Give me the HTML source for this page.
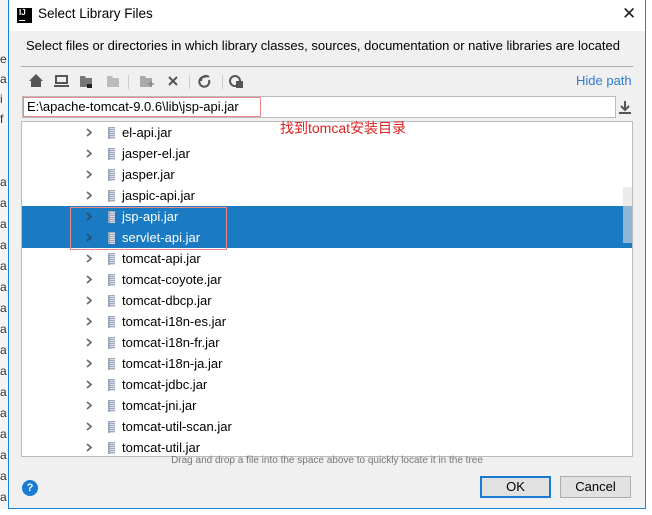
<!DOCTYPE html>
<html><head><meta charset="utf-8"><style>
*{margin:0;padding:0;box-sizing:border-box}
body{width:652px;height:515px;overflow:hidden;background:#fff;font-family:"Segoe UI","Liberation Sans","Noto Sans CJK SC",sans-serif;font-size:13px;color:#000;position:relative}
.abs{position:absolute}
#dlg{left:8px;top:0;width:638px;height:509px;background:#f0f0f0;border:1px solid #1883d7;border-top:none}
#title{left:0;top:0;width:636px;height:31px;background:#fff}
.row{position:absolute;left:0;width:610px;height:21px;line-height:21px}
.row .chev{position:absolute;left:64px;top:6px;width:6px;height:9px}
.row .jar{position:absolute;left:86px;top:5px;width:7px;height:12px;background:repeating-linear-gradient(#9ab 0 1px,#dde 1px 2px);border-left:2px solid #9ab}
.row .t{position:absolute;left:100px;top:0}
.sel{background:#1a7bc3;color:#fff}
</style></head><body>
<div class="abs" style="left:0;top:0;width:8px;height:515px;background:#f4f4f4;font-size:12px;color:#333">
<div class="abs" style="top:52px;left:0">e</div><div class="abs" style="top:72px;left:0">a</div><div class="abs" style="top:92px;left:0">i</div><div class="abs" style="top:112px;left:0">f</div>
<div class="abs" style="top:175px">a</div><div class="abs" style="top:196px">a</div><div class="abs" style="top:217px">a</div><div class="abs" style="top:238px">a</div><div class="abs" style="top:259px">a</div><div class="abs" style="top:280px">a</div><div class="abs" style="top:301px">a</div><div class="abs" style="top:322px">a</div><div class="abs" style="top:343px">a</div><div class="abs" style="top:364px">a</div><div class="abs" style="top:385px">a</div><div class="abs" style="top:406px">a</div><div class="abs" style="top:427px">a</div><div class="abs" style="top:448px">a</div><div class="abs" style="top:469px">a</div><div class="abs" style="top:490px">a</div>
</div>
<div class="abs" style="left:0;top:509px;width:652px;height:6px;background:#fff"></div>
<svg width="0" height="0" style="position:absolute"><defs><symbol id="cv" viewBox="0 0 6 9"><path d="M1 1l4 3.5L1 8" fill="none" stroke="#666" stroke-width="1.6"/></symbol><symbol id="cvs" viewBox="0 0 6 9"><path d="M1 1l4 3.5L1 8" fill="none" stroke="#2d4a66" stroke-width="1.6"/></symbol></defs></svg>
<div class="abs" id="dlg">
 <div class="abs" id="title">
  <div class="abs" style="left:8px;top:8px;width:15px;height:15px;background:#000;color:#fff;font-size:8px;font-weight:bold;line-height:10px;padding-left:2px">IJ<div style="position:absolute;left:2px;bottom:2px;width:6px;height:1px;background:#fff"></div></div>
  <div class="abs" style="left:29px;top:6px;font-size:13.5px">Select Library Files</div>
  <div class="abs" style="left:613px;top:4px;font-size:17px;font-weight:300;color:#222">✕</div>
 </div>
 <div class="abs" style="left:17px;top:38px;font-size:13px">Select files or directories in which library classes, sources, documentation or native libraries are located</div>
 <div class="abs" style="left:12px;top:66px;width:612px;height:1px;background:#aaa"></div>
 <svg class="abs" style="left:18px;top:72px" width="240" height="18" viewBox="0 0 240 18">
  <path d="M2 9 L9 2 L16 9 H14 V15 H4 V9Z" fill="#555"/>
  <rect x="29" y="4" width="11" height="7" fill="none" stroke="#555" stroke-width="2"/><rect x="27" y="13" width="15" height="2" fill="#555"/>
  <path d="M53 4h5l1 2h6v9h-12z" fill="#777"/><rect x="60" y="12" width="5" height="4" fill="#222"/>
  <path d="M80 4h5l1 2h6v9h-12z" fill="#bbb"/>
  <rect x="101" y="3" width="1" height="14" fill="#ccc"/>
  <path d="M113 4h5l1 2h6v9h-12z" fill="#aaa"/><path d="M121 12h6M124 9v6" stroke="#888" stroke-width="1.5"/>
  <path d="M142 5l8 8M150 5l-8 8" stroke="#555" stroke-width="2"/>
  <rect x="162" y="3" width="1" height="14" fill="#ccc"/>
  <path d="M179 5a5 5 0 1 0 3 3" fill="none" stroke="#555" stroke-width="2"/><path d="M174 9a5 5 0 0 1 8-4" fill="none" stroke="#555" stroke-width="2"/>
  <rect x="195" y="3" width="1" height="14" fill="#ccc"/>
  <circle cx="208" cy="9" r="5" fill="none" stroke="#555" stroke-width="2"/><rect x="209" y="9" width="7" height="7" fill="#555"/>
 </svg>
 <div class="abs" style="left:567px;top:73px;color:#2e7bcf;font-size:13px">Hide path</div>
 <div class="abs" style="left:13px;top:96px;width:594px;height:22px;background:#fff;border:1px solid #bbb"></div>
 <div class="abs" style="left:14px;top:97px;width:238px;height:20px;border:1px solid #e88"></div>
 <div class="abs" style="left:18px;top:99px;font-size:13px">E:\apache-tomcat-9.0.6\lib\jsp-api.jar</div>
 <svg class="abs" style="left:609px;top:100px" width="14" height="14"><path d="M7 1v8M3 6l4 4 4-4" stroke="#555" stroke-width="2" fill="none"/><rect x="1" y="12" width="12" height="2" fill="#555"/></svg>
 <div class="abs" style="left:12px;top:121px;width:612px;height:336px;background:#fff;border:1px solid #bbb;overflow:hidden">
  <div class="row" style="top:0"><svg class="chev"><use href="#cv"/></svg><span class="jar"></span><span class="t">el-api.jar</span></div>
  <div class="row" style="top:21px"><svg class="chev"><use href="#cv"/></svg><span class="jar"></span><span class="t">jasper-el.jar</span></div>
  <div class="row" style="top:42px"><svg class="chev"><use href="#cv"/></svg><span class="jar"></span><span class="t">jasper.jar</span></div>
  <div class="row" style="top:63px"><svg class="chev"><use href="#cv"/></svg><span class="jar"></span><span class="t">jaspic-api.jar</span></div>
  <div class="row sel" style="top:84px"><svg class="chev"><use href="#cvs"/></svg><span class="jar"></span><span class="t">jsp-api.jar</span></div>
  <div class="row sel" style="top:105px"><svg class="chev"><use href="#cvs"/></svg><span class="jar"></span><span class="t">servlet-api.jar</span></div>
  <div class="row" style="top:126px"><svg class="chev"><use href="#cv"/></svg><span class="jar"></span><span class="t">tomcat-api.jar</span></div>
  <div class="row" style="top:147px"><svg class="chev"><use href="#cv"/></svg><span class="jar"></span><span class="t">tomcat-coyote.jar</span></div>
  <div class="row" style="top:168px"><svg class="chev"><use href="#cv"/></svg><span class="jar"></span><span class="t">tomcat-dbcp.jar</span></div>
  <div class="row" style="top:189px"><svg class="chev"><use href="#cv"/></svg><span class="jar"></span><span class="t">tomcat-i18n-es.jar</span></div>
  <div class="row" style="top:210px"><svg class="chev"><use href="#cv"/></svg><span class="jar"></span><span class="t">tomcat-i18n-fr.jar</span></div>
  <div class="row" style="top:231px"><svg class="chev"><use href="#cv"/></svg><span class="jar"></span><span class="t">tomcat-i18n-ja.jar</span></div>
  <div class="row" style="top:252px"><svg class="chev"><use href="#cv"/></svg><span class="jar"></span><span class="t">tomcat-jdbc.jar</span></div>
  <div class="row" style="top:273px"><svg class="chev"><use href="#cv"/></svg><span class="jar"></span><span class="t">tomcat-jni.jar</span></div>
  <div class="row" style="top:294px"><svg class="chev"><use href="#cv"/></svg><span class="jar"></span><span class="t">tomcat-util-scan.jar</span></div>
  <div class="row" style="top:315px"><svg class="chev"><use href="#cv"/></svg><span class="jar"></span><span class="t">tomcat-util.jar</span></div>
  <div class="abs" style="left:601px;top:65px;width:9px;height:56px;background:#ddd;opacity:.6"></div>
  <div class="abs" style="left:48px;top:85px;width:157px;height:43px;border:1px solid #e88"></div>
 </div>
 <div class="abs" style="left:271px;top:118px;color:#e02020;font-size:14px;font-family:'Liberation Sans','Noto Sans CJK SC',sans-serif">找到tomcat安装目录</div>
 <div class="abs" style="left:0;top:455px;width:636px;text-align:center;font-size:10px;color:#777">Drag and drop a file into the space above to quickly locate it in the tree</div>
 <div class="abs" style="left:13px;top:480px;width:16px;height:16px;border-radius:50%;background:#1a7bd5;color:#fff;font-size:11px;text-align:center;line-height:16px;font-weight:bold">?</div>
 <div class="abs" style="left:471px;top:476px;width:71px;height:22px;background:#e1e1e1;border:2px solid #1a7bd5;text-align:center;line-height:18px">OK</div>
 <div class="abs" style="left:551px;top:476px;width:71px;height:22px;background:#e1e1e1;border:1px solid #adadad;text-align:center;line-height:20px">Cancel</div>
</div>
</body></html>
